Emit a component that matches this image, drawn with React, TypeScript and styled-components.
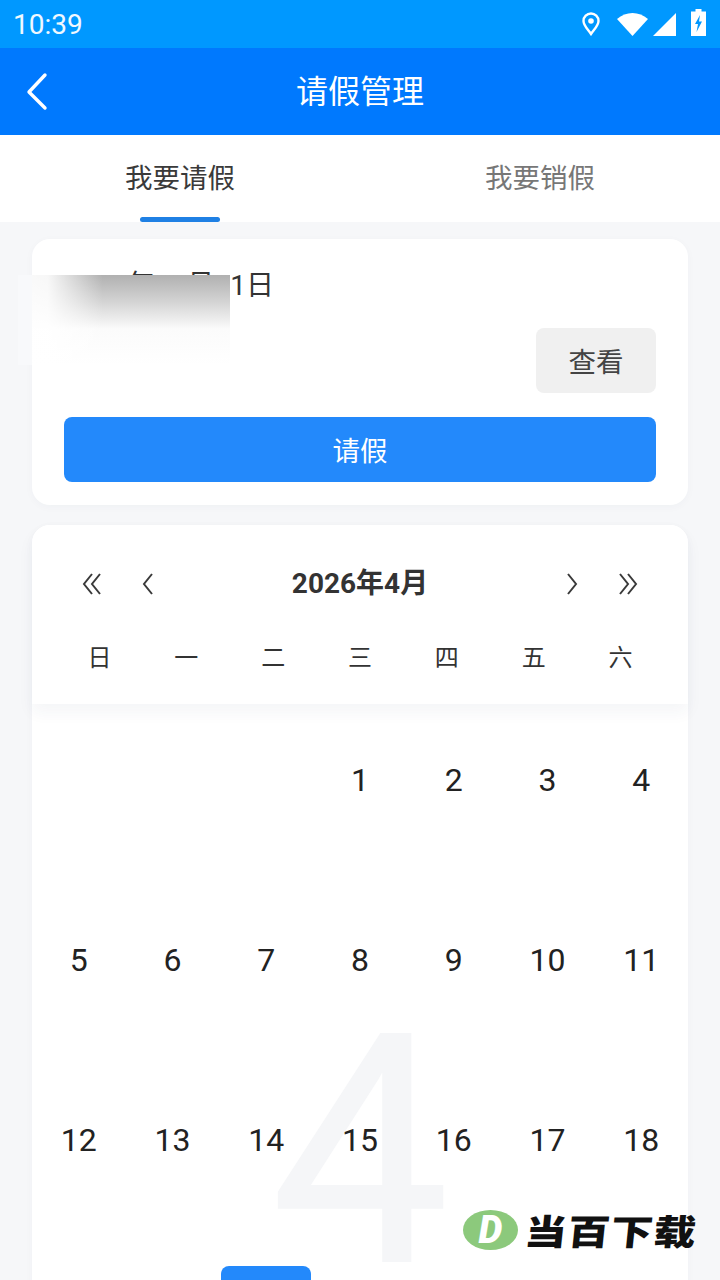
import React from 'react'
import styled, { createGlobalStyle } from 'styled-components'

const CN = `Roboto, "Noto Sans CJK SC", sans-serif`

const GlobalStyle = createGlobalStyle`
    html, body {
        margin: 0;
        padding: 0;
        height: 1280px;
        overflow: hidden;
        background: #f6f7f9;
        font-family: ${CN};
    }
`

const Page = styled.div`
    position: relative;
    width: 720px;
    height: 1280px;
    overflow: hidden;
    background: #f6f7f9;
`

const StatusBar = styled.div`
    height: 48px;
    background: #0098ff;
    display: flex;
    align-items: center;
    justify-content: space-between;
    padding: 0 14px 0 13px;
    box-sizing: border-box;
    color: #f0f8ff;
`

const Clock = styled.span`
    font-size: 28px;
    line-height: 46px;
    padding-top: 2px;
`

const StatusIcons = styled.div`
    display: flex;
    align-items: flex-end;
    margin-bottom: 3px;

    svg {
        display: block;
    }
`

const NavBar = styled.header`
    height: 87px;
    background: #0079fe;
    display: flex;
    align-items: center;
    justify-content: center;
    position: relative;
    color: #fff;
`

const BackBtn = styled.svg`
    position: absolute;
    left: 24px;
    top: 23px;
`

const Title = styled.h1`
    margin: 0;
    padding-top: 2px;
    font-size: 32px;
    font-weight: 400;
    line-height: 85px;
`

const Tabs = styled.div`
    height: 87px;
    background: #fff;
    display: flex;
`

const Tab = styled.div<{ $active?: boolean }>`
    flex: 1;
    display: flex;
    flex-direction: column;
    align-items: center;
    justify-content: space-between;
    font-size: 27.5px;
    line-height: 40px;
    padding-top: 24px;
    box-sizing: border-box;
    color: ${(p) => (p.$active ? '#3a3a3a' : '#777')};
`

const TabMark = styled.div`
    width: 80px;
    height: 5px;
    border-radius: 3px;
    background: #1f80e4;
`

const Content = styled.main`
    padding: 17px 32px 0;
    display: flex;
    flex-direction: column;
    gap: 20px;
`

const Card = styled.section`
    position: relative;
    background: #fff;
    border-radius: 18px;
    box-shadow: 0 2px 8px rgba(40, 60, 90, 0.03);
`

const LeaveCard = styled(Card)`
    padding: 30px 32px 23px;
    display: flex;
    flex-direction: column;
`

const DateText = styled.div`
    font-size: 28px;
    line-height: 34px;
    color: #333;
`

const Smudge = styled.div`
    position: absolute;
    left: -14px;
    top: 36px;
    width: 212px;
    height: 90px;
    background:
        linear-gradient(to right, #f8f9fb 0, #f8f9fb 6.6%, rgba(255, 255, 255, 0.92) 6.6%, rgba(255, 255, 255, 0.9) 14%, rgba(255, 255, 255, 0) 40%),
        linear-gradient(to bottom, #b0b0b0 0, #d4d4d4 30%, #fbfbfb 60%, #fff 100%);
`

const CheckBtn = styled.button`
    align-self: flex-end;
    width: 120px;
    height: 65px;
    margin-top: 25px;
    border: 0;
    border-radius: 8px;
    background: #f0f0f0;
    color: #444;
    font-family: ${CN};
    font-size: 27.5px;
    padding: 0 0 2px;
`

const ApplyBtn = styled.button`
    height: 65px;
    margin-top: 24px;
    border: 0;
    border-radius: 8px;
    background: #2389fb;
    color: #fff;
    font-family: ${CN};
    font-size: 27.5px;
    padding: 0 0 2px;
`

const CalHeader = styled.div`
    position: relative;
    z-index: 1;
    background: #fff;
    border-radius: 18px 18px 0 0;
    padding: 41px 24px 28px;
    box-shadow: 0 8px 16px rgba(40, 60, 90, 0.05);
`

const MonthRow = styled.div`
    height: 36px;
    display: flex;
    align-items: center;
    padding: 0 24px;
`

const MonthTitle = styled.div`
    flex: 1;
    text-align: center;
    font-size: 28px;
    font-weight: 700;
    line-height: 36px;
    color: #333;
`

const ArrowGroup = styled.div`
    display: flex;
    gap: 32px;
`

const WeekRow = styled.div`
    display: grid;
    grid-template-columns: repeat(7, 1fr);
    margin-top: 38px;
    font-size: 24px;
    line-height: 36px;
    text-align: center;
    color: #333;
`

const CalBody = styled.div`
    position: relative;
    display: grid;
    grid-template-columns: repeat(7, 1fr);
    grid-auto-rows: 180px;
`

const MonthMark = styled.div`
    position: absolute;
    left: 0;
    right: 0;
    top: 328px;
    text-align: center;
    font-size: 322px;
    line-height: 240px;
    color: #f5f6f8;
`

const DayCell = styled.div`
    position: relative;
    display: flex;
    justify-content: center;
    padding-top: 22px;
`

const DayBox = styled.div<{ $selected?: boolean }>`
    width: 90px;
    height: 108px;
    display: flex;
    align-items: center;
    justify-content: center;
    border-radius: 8px;
    font-size: 32px;
    color: #222;
    background: ${(p) => (p.$selected ? '#2389fb' : 'transparent')};
`

const Watermark = styled.div`
    position: absolute;
    left: 463px;
    top: 1210px;
    display: flex;
    align-items: center;
    gap: 7px;
`

const LogoBadge = styled.div`
    width: 55px;
    height: 40px;
    border-radius: 50%;
    background: #8cc97c;
    display: flex;
    align-items: center;
    justify-content: center;
    color: #fff;
    font-size: 38px;
    font-weight: 900;
    font-style: italic;
    line-height: 40px;
`

const LogoText = styled.div`
    font-family: "Noto Sans CJK SC", sans-serif;
    font-size: 42px;
    font-weight: 900;
    line-height: 40px;
    color: #111;
    letter-spacing: 1px;
    transform: skewX(-6deg) scaleY(0.84);
`

const Chevron = ({ dir, double }: { dir: 'left' | 'right'; double?: boolean }) => {
    const flip = dir === 'right' ? 'translate(24 0) scale(-1 1)' : undefined
    return (
        <svg width="24" height="24" viewBox="0 0 24 24" fill="none" stroke="#3a3a3a" strokeWidth="2">
            <g transform={flip}>
                {double ? (
                    <>
                        <path d="M12 2 L4 12 L12 22" />
                        <path d="M20 2 L12 12 L20 22" />
                    </>
                ) : (
                    <path d="M16 2 L8 12 L16 22" />
                )}
            </g>
        </svg>
    )
}

const PinIcon = () => (
    <svg width="18" height="24" viewBox="0 0 18 24" fill="none">
        <path d="M9 22 C5.5 17 1.5 13.5 1.5 9 A7.5 7.5 0 0 1 16.5 9 C16.5 13.5 12.5 17 9 22Z" stroke="#fff" strokeWidth="2.4" />
        <circle cx="9" cy="9" r="2.8" fill="#fff" />
    </svg>
)

const WifiIcon = () => (
    <svg width="31" height="23" viewBox="0 0 31 23" style={{ marginLeft: 17 }}>
        <path d="M0 6 C9 -2 22 -2 31 6 L15.5 23Z" fill="#fff" />
    </svg>
)

const SignalIcon = () => (
    <svg width="23" height="23" viewBox="0 0 23 23" style={{ marginLeft: 5 }}>
        <path d="M23 0 V23 H0Z" fill="#fff" />
    </svg>
)

const BatteryIcon = () => (
    <svg width="15" height="27" viewBox="0 0 15 27" style={{ marginLeft: 15 }}>
        <path d="M4.5 0 H10.5 V2.5 H15 V27 H0 V2.5 H4.5Z" fill="#fff" />
        <path d="M9 6 L4 15 H7 L5.5 23 L11 12.5 H8Z" fill="#0098ff" />
    </svg>
)

const WEEK = ['日', '一', '二', '三', '四', '五', '六']
const LAST_VISIBLE = 18
// the screenshot ends above the number in the fourth row, only the tile of the 21st shows
const days = Array.from({ length: 21 }, (_, i) => i + 1)

export default function App() {
    return (
        <Page>
            <GlobalStyle />
            <StatusBar>
                <Clock>10:39</Clock>
                <StatusIcons>
                    <PinIcon />
                    <WifiIcon />
                    <SignalIcon />
                    <BatteryIcon />
                </StatusIcons>
            </StatusBar>
            <NavBar>
                <BackBtn width="26" height="42" viewBox="0 0 26 42" fill="none">
                    <path d="M21 4 L5 21 L21 37" stroke="#fff" strokeWidth="3.4" strokeLinecap="round" strokeLinejoin="round" />
                </BackBtn>
                <Title>请假管理</Title>
            </NavBar>
            <Tabs>
                <Tab $active>
                    我要请假
                    <TabMark />
                </Tab>
                <Tab>我要销假</Tab>
            </Tabs>
            <Content>
                <LeaveCard>
                    <DateText>2026年04月01日</DateText>
                    <Smudge />
                    <CheckBtn>查看</CheckBtn>
                    <ApplyBtn>请假</ApplyBtn>
                </LeaveCard>
                <Card>
                    <CalHeader>
                        <MonthRow>
                            <ArrowGroup>
                                <Chevron dir="left" double />
                                <Chevron dir="left" />
                            </ArrowGroup>
                            <MonthTitle>2026年4月</MonthTitle>
                            <ArrowGroup>
                                <Chevron dir="right" />
                                <Chevron dir="right" double />
                            </ArrowGroup>
                        </MonthRow>
                        <WeekRow>
                            {WEEK.map((w) => (
                                <div key={w}>{w}</div>
                            ))}
                        </WeekRow>
                    </CalHeader>
                    <CalBody>
                        <MonthMark>4</MonthMark>
                        {[0, 1, 2].map((n) => (
                            <DayCell key={`blank-${n}`} />
                        ))}
                        {days.map((d) => (
                            <DayCell key={d}>
                                <DayBox $selected={d === 21}>{d <= LAST_VISIBLE ? d : ''}</DayBox>
                            </DayCell>
                        ))}
                    </CalBody>
                </Card>
            </Content>
            <Watermark>
                <LogoBadge>D</LogoBadge>
                <LogoText>当百下载</LogoText>
            </Watermark>
        </Page>
    )
}
